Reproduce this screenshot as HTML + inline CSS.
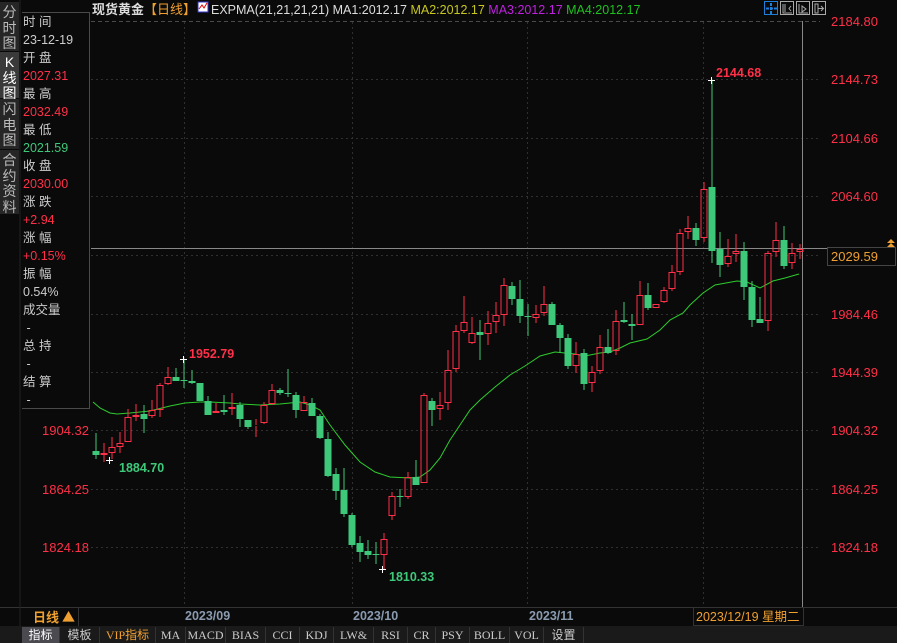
<!DOCTYPE html>
<html><head><meta charset="utf-8"><style>
*{margin:0;padding:0;box-sizing:border-box}
body{width:897px;height:643px;background:#0a0a0a;overflow:hidden;position:relative;font-family:"Liberation Sans","Noto Sans CJK SC",sans-serif;color:#ccc}
.a{position:absolute;white-space:nowrap}
.tab{position:absolute;left:0;width:19px;background:#262626;color:#bbb;font-size:14px;line-height:15.5px;text-align:center;padding-top:3px}
.info{position:absolute;left:22px;top:12px;width:68px;height:397px;border:1px solid #4a4a4a;border-left:none;font-size:12.5px;line-height:18px;padding-left:1px}
.r{color:#ff3048}.g{color:#3ec87a}
.bar{position:absolute;left:0;top:626px;width:897px;height:17px;background:#1a1a1a;font-size:12px;font-family:"Liberation Serif","Noto Sans CJK SC",serif}
.bar span{position:absolute;top:1px;height:16px;line-height:16px;text-align:center;color:#ccc;border-right:1px solid #333}
</style></head><body>
<div class="tab" style="top:2px;height:49px">分<br>时<br>图</div>
<div class="tab" style="top:52px;height:46px;background:#3a3a3a;color:#fff">K<br>线<br>图</div>
<div class="tab" style="top:99px;height:50px">闪<br>电<br>图</div>
<div class="tab" style="top:150px;height:64px">合<br>约<br>资<br>料</div>

<svg class="a" style="left:0;top:0" width="897" height="643">
<g stroke="#303030" stroke-dasharray="2,3" stroke-width="1">
<line x1="91" y1="21.5" x2="820" y2="21.5" stroke="#4a4a4a" stroke-dasharray="4,3"/>
<line x1="91" y1="79.5" x2="820" y2="79.5"/><line x1="91" y1="138.5" x2="820" y2="138.5"/>
<line x1="91" y1="196.5" x2="820" y2="196.5"/><line x1="91" y1="255.5" x2="820" y2="255.5"/>
<line x1="91" y1="314.5" x2="820" y2="314.5"/><line x1="91" y1="372.5" x2="820" y2="372.5"/>
<line x1="91" y1="430.5" x2="820" y2="430.5"/><line x1="91" y1="489.5" x2="820" y2="489.5"/>
<line x1="91" y1="547.5" x2="820" y2="547.5"/>
<line x1="184.5" y1="22" x2="184.5" y2="607"/><line x1="352.5" y1="22" x2="352.5" y2="607"/>
<line x1="527.5" y1="22" x2="527.5" y2="607"/><line x1="703.5" y1="22" x2="703.5" y2="607"/>
</g>
<line x1="0" y1="607.5" x2="897" y2="607.5" stroke="#333"/>
<line x1="20" y1="0" x2="20" y2="626" stroke="#222"/>
<line x1="802.5" y1="21" x2="802.5" y2="607" stroke="#888"/>
<line x1="91" y1="248.5" x2="827" y2="248.5" stroke="#888"/>
<polyline fill="none" stroke="#2ecc2e" stroke-width="1" points="93,402 100,408 110,413 117,414 130,413 150,411 170,406 185,403 200,402 210,402 230,403 240,404 260,405 280,404 300,402 310,405 320,410 330,425 345,445 360,462 375,472 390,477 410,478 420,477 430,470 440,458 450,440 460,425 470,410 480,400 495,387 510,375 525,366 540,356 555,352 565,353 575,354 585,356 590,355 600,353 610,352 620,348 630,343 647,339 660,330 670,320 683,313 690,305 703,293 715,285 737,281 747,282 760,288 773,281 785,278 799,274"/>
<g id="c"></g>
<text x="119" y="472" fill="#3ec87a" font-size="12.5" font-weight="bold" font-family="Liberation Sans">1884.70</text>
<text x="189" y="358" fill="#ff3048" font-size="12.5" font-weight="bold" font-family="Liberation Sans">1952.79</text>
<text x="389" y="581" fill="#3ec87a" font-size="12.5" font-weight="bold" font-family="Liberation Sans">1810.33</text>
<text x="716" y="77" fill="#ff3048" font-size="12.5" font-weight="bold" font-family="Liberation Sans">2144.68</text>
<g stroke="#fff"><line x1="106" y1="460.5" x2="113" y2="460.5"/><line x1="109.5" y1="457" x2="109.5" y2="464"/>
<line x1="180" y1="359.5" x2="187" y2="359.5"/><line x1="183.5" y1="356" x2="183.5" y2="363"/>
<line x1="379" y1="569.5" x2="386" y2="569.5"/><line x1="382.5" y1="566" x2="382.5" y2="573"/>
<line x1="708" y1="80.5" x2="715" y2="80.5"/><line x1="711.5" y1="77" x2="711.5" y2="84"/></g>
<g fill="#ff3048" font-size="13" font-family="Liberation Sans">
<text x="831" y="26">2184.80</text><text x="831" y="84">2144.73</text><text x="831" y="143">2104.66</text>
<text x="831" y="201">2064.60</text><text x="831" y="319">1984.46</text><text x="831" y="377">1944.39</text>
<text x="831" y="435">1904.32</text><text x="831" y="494">1864.25</text><text x="831" y="552">1824.18</text>
<text x="42" y="435">1904.32</text><text x="42" y="494">1864.25</text><text x="42" y="552">1824.18</text>
</g>
<rect x="827.5" y="247.5" width="68" height="18" fill="#0a0a0a" stroke="#444"/>
<text x="831" y="261" fill="#f0a030" font-size="13" font-family="Liberation Sans">2029.59</text>
<path d="M887 243l4-4 4 4zM887 247l4-4 4 4z" fill="#f0a030"/>
<g fill="#8a9bb0" font-size="12.5" font-weight="bold" font-family="Liberation Sans">
<text x="185" y="620">2023/09</text><text x="353" y="620">2023/10</text><text x="529" y="620">2023/11</text></g>
<rect x="693.5" y="607.5" width="110" height="18" fill="#0a0a0a" stroke="#333"/>
<text x="696" y="621" fill="#f0a030" font-size="12.5" font-family="Liberation Sans,Noto Sans CJK SC,sans-serif">2023/12/19 星期二</text>
<line x1="78.5" y1="607" x2="78.5" y2="626" stroke="#333"/>
<text x="33" y="622" fill="#f0a030" font-size="13" font-weight="bold" font-family="Noto Sans CJK SC,sans-serif">日线 ▲</text>
<g fill="none" stroke="#aaa"><rect x="764.5" y="1.5" width="13" height="13" stroke="#1e7fd8"/><rect x="780.5" y="1.5" width="13" height="13"/><rect x="796.5" y="1.5" width="13" height="13"/><rect x="812.5" y="1.5" width="13" height="13"/></g>
<path d="M771 3v11M766 8.5h11" stroke="#1e7fd8" stroke-width="2" stroke-dasharray="3,1"/>
<path d="M783 4v9h9M785 4v8M791 6l-2 2.5 2 2.5M799 4v9h9M802 6v6l4-3zM815 4v9h3v-9zM818 8.5h5M821 6l2.5 2.5-2.5 2.5" stroke="#aaa" fill="none"/>
<rect x="198" y="2" width="10" height="10" fill="#fff" stroke="#33c"/><path d="M199 9l3-4 2 3 3-5" stroke="#d00" fill="none"/>
</svg>

<div class="a" style="left:92px;top:1px;font-size:13px;line-height:17px">
<span style="color:#ddd;font-weight:bold">现货黄金</span><span style="color:#f0a030">【日线】</span></div>
<div class="a" style="left:211px;top:2px;font-size:12.5px;line-height:16px"><span style="color:#ddd">EXPMA(21,21,21,21) MA1:2012.17 </span> <span style="color:#c8c820">MA2:2012.17 </span> <span style="color:#c020e0">MA3:2012.17 </span> <span style="color:#20c020">MA4:2012.17</span></div>

<div class="info">
<div>时 间</div><div>23-12-19</div><div>开 盘</div><div class="r">2027.31</div>
<div>最 高</div><div class="r">2032.49</div><div>最 低</div><div class="g">2021.59</div>
<div>收 盘</div><div class="r">2030.00</div><div>涨 跌</div><div class="r">+2.94</div>
<div>涨 幅</div><div class="r">+0.15%</div><div>振 幅</div><div>0.54%</div>
<div>成交量</div><div>&nbsp;-</div><div>总 持</div><div>&nbsp;-</div><div>结 算</div><div>&nbsp;-</div>
</div>

<div class="bar">
<span style="left:22px;width:38px;background:#4a4a50;color:#fff;font-family:'Noto Sans CJK SC',sans-serif">指标</span>
<span style="left:60px;width:40px;font-family:'Noto Sans CJK SC',sans-serif">模板</span>
<span style="left:100px;width:56px;color:#f0a030">VIP指标</span>
<span style="left:156px;width:30px">MA</span><span style="left:186px;width:40px">MACD</span>
<span style="left:226px;width:40px">BIAS</span><span style="left:266px;width:34px">CCI</span>
<span style="left:300px;width:34px">KDJ</span><span style="left:334px;width:40px">LW&amp;</span>
<span style="left:374px;width:34px">RSI</span><span style="left:408px;width:28px">CR</span>
<span style="left:436px;width:34px">PSY</span><span style="left:470px;width:40px">BOLL</span>
<span style="left:510px;width:34px">VOL</span><span style="left:544px;width:40px;font-family:'Noto Sans CJK SC',sans-serif">设置</span>
</div>

<script>
var d=[["g",96,433,451,455,459],["r",104,443,453,455,462],["r",112,437,447,453,459],["r",120,432,443,447,453],["r",128,409,417,442,442],["r",136,404,415,417,421],["g",144,405,414,419,433],["r",152,400,410,416,418],["r",160,383,385,410,417],["r",168,367,377,384,385],["g",176,368,377,381,381],["g",184,359,380,381,388],["g",192,370,381,383,384],["g",200,383,383,401,401],["g",208,396,401,415,415],["r",216,403,411,413,413],["g",224,395,410,412,415],["r",232,393,407,409,415],["g",240,402,405,419,427],["g",248,420,420,427,429],["r",256,419,425,426,437],["r",264,402,405,423,424],["r",272,384,390,404,405],["g",280,388,390,393,395],["g",288,369,393,394,397],["g",296,392,395,410,418],["r",304,396,402,411,411],["g",312,398,403,416,416],["g",320,414,416,438,439],["g",328,432,439,476,477],["g",336,468,474,491,500],["g",344,468,490,514,517],["g",352,513,515,545,547],["g",360,536,543,552,562],["g",368,540,551,555,559],["g",376,542,554,555,564],["r",384,533,539,555,569],["r",392,492,496,516,520],["g",400,489,496,497,507],["r",408,472,477,497,499],["g",416,460,477,485,485],["r",424,393,395,483,483],["g",432,398,401,410,426],["r",440,392,405,409,420],["r",448,350,370,403,410],["r",456,325,331,369,372],["r",464,296,322,331,333],["r",472,317,333,343,344],["g",480,320,332,335,360],["r",488,311,323,334,345],["r",496,302,315,322,333],["r",504,278,285,315,326],["g",512,282,286,299,305],["g",520,280,299,316,323],["g",528,304,316,317,336],["r",536,305,314,318,323],["r",544,286,304,313,316],["g",552,302,304,325,325],["g",560,323,325,338,353],["g",568,334,338,366,369],["r",576,342,354,366,373],["g",584,349,353,384,390],["r",592,366,372,383,392],["r",600,335,347,371,374],["g",608,329,347,353,354],["r",616,310,321,351,355],["g",624,302,320,322,323],["g",632,314,324,326,340],["r",640,281,295,325,325],["g",648,283,295,308,310],["r",656,304,304,308,308],["r",664,287,290,302,303],["r",672,265,272,289,291],["r",680,229,233,272,275],["r",688,216,228,232,239],["g",696,223,228,240,246],["r",704,182,189,238,242],["g",712,80,187,251,263],["g",720,232,249,265,277],["r",728,239,256,264,267],["r",736,234,251,254,262],["g",744,242,251,287,300],["g",752,281,287,320,327],["g",760,297,319,323,323],["r",768,251,253,321,331],["r",776,222,240,252,257],["g",784,226,240,266,269],["r",792,243,253,263,269],["r",800,244,249,252,259]];
var s="";d.forEach(function(c){var t=c[0],x=c[1]-0.5,col=t=="r"?"#ff3048":"#3ec87a",h=Math.max(c[4]-c[3],1);
if(t=="r"){s+='<line x1="'+(x+.5)+'" y1="'+c[2]+'" x2="'+(x+.5)+'" y2="'+c[3]+'" stroke="'+col+'"/><line x1="'+(x+.5)+'" y1="'+c[4]+'" x2="'+(x+.5)+'" y2="'+c[5]+'" stroke="'+col+'"/><rect x="'+(x-2.5)+'" y="'+(c[3]+.5)+'" width="6" height="'+(h-1>0?h-1:0)+'" fill="none" stroke="'+col+'"/>';}
else{s+='<line x1="'+(x+.5)+'" y1="'+c[2]+'" x2="'+(x+.5)+'" y2="'+c[5]+'" stroke="'+col+'"/><rect x="'+(x-3)+'" y="'+c[3]+'" width="7" height="'+h+'" fill="'+col+'"/>';}});
document.getElementById("c").innerHTML=s;
</script>
</body></html>
